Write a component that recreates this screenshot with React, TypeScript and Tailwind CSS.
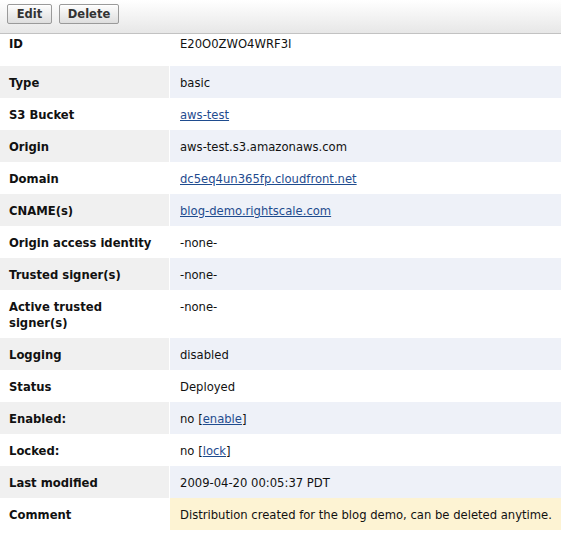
import React from 'react';

type Row = {
  label: string;
  value: React.ReactNode;
  tone?: 'plain' | 'shaded' | 'note';
  first?: boolean;
};

const linkCls = 'text-[#1f4c8f] underline';

const rows: Row[] = [
  { label: 'ID', value: 'E20O0ZWO4WRF3I', first: true },
  { label: 'Type', value: 'basic', tone: 'shaded' },
  { label: 'S3 Bucket', value: <a href="#" className={linkCls}>aws-test</a> },
  { label: 'Origin', value: 'aws-test.s3.amazonaws.com', tone: 'shaded' },
  { label: 'Domain', value: <a href="#" className={linkCls}>dc5eq4un365fp.cloudfront.net</a> },
  { label: 'CNAME(s)', value: <a href="#" className={linkCls}>blog-demo.rightscale.com</a>, tone: 'shaded' },
  { label: 'Origin access identity', value: '-none-' },
  { label: 'Trusted signer(s)', value: '-none-', tone: 'shaded' },
  { label: 'Active trusted signer(s)', value: '-none-' },
  { label: 'Logging', value: 'disabled', tone: 'shaded' },
  { label: 'Status', value: 'Deployed' },
  {
    label: 'Enabled:',
    value: (
      <>
        no [<a href="#" className={linkCls}>enable</a>]
      </>
    ),
    tone: 'shaded',
  },
  {
    label: 'Locked:',
    value: (
      <>
        no [<a href="#" className={linkCls}>lock</a>]
      </>
    ),
  },
  { label: 'Last modified', value: '2009-04-20 00:05:37 PDT', tone: 'shaded' },
  { label: 'Comment', value: 'Distribution created for the blog demo, can be deleted anytime.', tone: 'note' },
];

export default function App() {
  return (
    <div className="w-[561px] h-[534px] bg-white text-[11.6px] leading-[16px] text-[#111] font-['DejaVu_Sans',sans-serif] overflow-hidden">
      {/* Toolbar */}
      <div className="h-[34px] flex items-start gap-[6px] pl-[7px] pt-[4px] bg-gradient-to-b from-white to-[#e7e7e7] border-b border-[#c2c2c2]">
        <button className="h-[20px] w-[45px] rounded-[2px] border border-[#9a9a9a] bg-gradient-to-b from-[#fdfdfd] to-[#dedede] font-bold text-[#333] text-[11.5px] leading-[18px] shadow-[inset_0_1px_0_#fff]">
          Edit
        </button>
        <button className="h-[20px] w-[60px] ml-[1px] rounded-[2px] border border-[#9a9a9a] bg-gradient-to-b from-[#fdfdfd] to-[#dedede] font-bold text-[#333] text-[11.5px] leading-[18px] shadow-[inset_0_1px_0_#fff]">
          Delete
        </button>
      </div>

      {/* Details */}
      <div className="flex flex-col">
        {rows.map((r) => (
          <div key={r.label} className="flex">
            <div
              className={`w-[169px] shrink-0 pl-[9px] pr-[8px] font-bold ${
                r.first ? 'pt-[2px] pb-[14px]' : 'pt-[9px] pb-[7px]'
              } ${r.tone === 'shaded' ? 'bg-[#f0f0f0]' : 'bg-white'}`}
            >
              {r.label === 'Active trusted signer(s)' ? (
                <>
                  Active trusted
                  <br />
                  signer(s)
                </>
              ) : (
                r.label
              )}
            </div>
            <div
              className={`ml-[1px] flex-1 pl-[10px] ${r.first ? 'pt-[2px] pb-[14px]' : 'pt-[9px] pb-[7px]'} ${
                r.tone === 'shaded' ? 'bg-[#eef1f8]' : r.tone === 'note' ? 'bg-[#fdf3d3]' : 'bg-white'
              }`}
            >
              {r.value}
            </div>
          </div>
        ))}
      </div>
    </div>
  );
}
